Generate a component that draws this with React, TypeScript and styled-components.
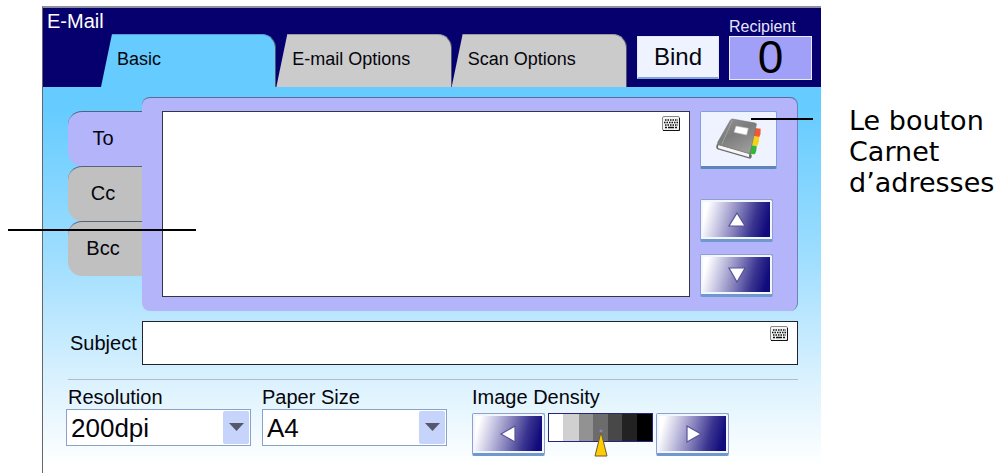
import React, { useState } from "react";
import styled, { createGlobalStyle } from "styled-components";

const navy = "#06006e";
const sans = '"Liberation Sans", Arial, sans-serif';

const GlobalStyle = createGlobalStyle`
  *, *::before, *::after { box-sizing: border-box; }
  body { margin: 0; background: #fff; color: #05050c; font-family: ${sans}; }
  button, input, select, textarea { font-family: inherit; color: inherit; margin: 0; }
`;

const Page = styled.div`
  display: flex;
  align-items: stretch;
  padding: 6px 0 0 42px;
  overflow: hidden;
`;

const Screen = styled.main`
  position: relative;
  flex: 1;
  min-width: 0;
  border-top: 2px solid #8c8f9c;
  border-left: 1px solid #62666e;
`;

const Header = styled.header`
  display: flex;
  align-items: flex-end;
  gap: 10px;
  height: 79px;
  padding-right: 9px;
  background: ${navy};
`;

const HeaderMain = styled.div`
  flex: 1;
  min-width: 0;
`;

const Title = styled.h1`
  margin: 0;
  padding-left: 4px;
  font-size: 20px;
  font-weight: 400;
  line-height: 26px;
  color: #fff;
`;

const Tabs = styled.nav`
  display: flex;
  padding-left: 58px;
`;

const Tab = styled.button<{ $active?: boolean }>`
  flex: 1;
  height: 53px;
  padding: 0 0 4px 16px;
  border: 0;
  border-right: 1px solid #50556e;
  border-top: 1px solid ${(p) => (p.$active ? "#5a9ccc" : "#9a9aa4")};
  border-radius: 0 14px 0 0;
  clip-path: polygon(11px 0, 100% 0, 100% 100%, 0 100%);
  background: ${(p) => (p.$active ? "#66ccff" : "#cbcbcb")};
  font-size: 18px;
  line-height: 20px;
  text-align: left;
  white-space: nowrap;
`;

const BindButton = styled.button`
  width: 82px;
  height: 43px;
  margin-bottom: 8px;
  padding: 0;
  border: 1px solid #dfe8fb;
  border-bottom: 2px solid #7fa6d6;
  background: #eef3ff;
  font-size: 24px;
`;

const Recipient = styled.div`
  width: 83px;
  padding-bottom: 7px;
`;

const RecipientLabel = styled.div`
  font-size: 16px;
  line-height: 18px;
  color: #e4e4fa;
`;

const RecipientCount = styled.output`
  display: block;
  height: 44px;
  border: 1px solid #e8e8ff;
  background: #a0a0f8;
  font-size: 46px;
  line-height: 40px;
  text-align: center;
  color: #000;
`;

const Body = styled.div`
  padding: 10px 23px 17px 25px;
  background: linear-gradient(#66ccff 6%, #a0deff 45%, #dcf2fe 77%, #fff 98%);
`;

const AddressRow = styled.section`
  display: flex;
`;

const SideTabs = styled.nav`
  display: flex;
  flex-direction: column;
  width: 74px;
  padding-top: 14px;
`;

const SideTab = styled.button<{ $active?: boolean }>`
  height: 55px;
  padding: 0 4px 2px 0;
  border: 0;
  border-top: 1px solid #56627a;
  border-radius: 14px 0 0 14px;
  background: ${(p) => (p.$active ? "#b4b4fa" : "#c0c0c0")};
  font-size: 20px;
`;

const AddressPanel = styled.div`
  flex: 1;
  min-width: 0;
  display: flex;
  gap: 10px;
  padding: 13px 20px 14px 20px;
  border-top: 1px solid #5c6a98;
  border-right: 1px solid #6f7fbc;
  border-radius: 8px;
  background: #b4b4fa;
`;

const Field = styled.div`
  position: relative;
  flex: 1;
  min-width: 0;
`;

const AddressBox = styled.textarea`
  display: block;
  width: 100%;
  height: 186px;
  padding: 8px 36px 8px 8px;
  border: 1px solid #33334a;
  border-radius: 0;
  background: #fff;
  font-size: 20px;
  resize: none;
`;

const SubjectBox = styled.input`
  display: block;
  width: 100%;
  height: 44px;
  padding: 0 36px 0 8px;
  border: 1px solid #22242c;
  border-radius: 0;
  background: #fff;
  font-size: 20px;
`;

const KeyboardMark = styled.span`
  position: absolute;
  top: 5px;
  right: 10px;
  line-height: 0;
`;

const PanelTools = styled.div`
  display: flex;
  flex-direction: column;
  gap: 12px;
  width: 77px;
`;

const BookButton = styled.button`
  position: relative;
  height: 58px;
  margin-bottom: auto;
  padding: 0;
  border: 1px solid #7fa0dc;
  border-bottom: 3px solid #5b86bc;
  border-radius: 2px;
  background: #eef3ff;
  line-height: 0;
`;

const ArrowButton = styled.button`
  width: 73px;
  height: 43px;
  padding: 0;
  border: 1px solid #8e9fd2;
  border-bottom: 3px solid #6f98cc;
  border-radius: 2px;
  background: linear-gradient(105deg, #fff 10%, #c4c2e0 30%, #8581bc 50%, #3a3490 72%, #100a7c 90%);
  box-shadow: inset 0 0 0 2px #f2f6ff;
  line-height: 0;
`;

const SubjectRow = styled.div`
  display: flex;
  align-items: center;
  margin-top: 10px;
`;

const SubjectLabel = styled.label`
  width: 74px;
  padding-left: 2px;
  font-size: 20px;
  line-height: 24px;
`;

const Settings = styled.section`
  display: flex;
  gap: 11px;
  margin: 14px 0 0 -2px;
  padding-top: 6px;
  position: relative;
  &::before {
    content: "";
    position: absolute;
    top: 0;
    left: 2px;
    right: 0;
    border-top: 1px solid #aebccb;
  }
`;

const Setting = styled.div`
  width: 185px;
`;

const Density = styled.div`
  margin-left: 14px;
`;

const SettingLabel = styled.label<{ $inset?: boolean }>`
  display: block;
  padding-left: ${(p) => (p.$inset ? 2 : 0)}px;
  font-size: 20px;
  line-height: 24px;
  white-space: nowrap;
`;

const SelectFrame = styled.div`
  display: grid;
  align-items: center;
  height: 37px;
  border: 1px solid #8aa2c8;
  background: #fff;
  & > * { grid-area: 1 / 1; }
`;

const Select = styled.select`
  appearance: none;
  width: 100%;
  height: 35px;
  padding: 0 32px 0 4px;
  border: 0;
  background: transparent;
  font-size: 26px;
`;

const SelectArrow = styled.span`
  display: flex;
  align-items: center;
  justify-content: center;
  justify-self: end;
  width: 26px;
  height: 33px;
  margin-right: 1px;
  border-radius: 2px;
  background: #c6d3fb;
  pointer-events: none;
`;

const DensityRow = styled.div`
  display: flex;
  gap: 3px;
  padding-top: 4px;
`;

const Scale = styled.div`
  position: relative;
  width: 105px;
`;

const ScaleInput = styled.input`
  appearance: none;
  display: block;
  width: 100%;
  height: 29px;
  border: 1px solid #2c2478;
  background: linear-gradient(
    90deg,
    #fff 0 14%, #d0d0d0 14% 29%, #929292 29% 43%, #6c6c6c 43% 57%,
    #484848 57% 71%, #222 71% 85%, #000 85%
  );
  &::-webkit-slider-thumb { appearance: none; width: 14px; height: 27px; background: transparent; }
`;

const Marker = styled.svg`
  position: absolute;
  top: 14px;
  margin-left: -7px;
  pointer-events: none;
`;

const CalloutLine = styled.span`
  position: absolute;
  height: 2px;
  background: #000;
  pointer-events: none;
`;

const FieldCallout = styled(CalloutLine)`
  top: 221px;
  left: -35px;
  width: 188px;
`;

const BookCallout = styled(CalloutLine)`
  top: 6px;
  left: 50px;
  width: 62px;
`;

const Note = styled.aside`
  flex: 0 0 180px;
  padding: 99px 0 0 28px;
  font-family: "DejaVu Sans", Verdana, sans-serif;
  font-size: 27px;
  line-height: 31px;
  color: #000;
  white-space: nowrap;
`;

const KeyboardIcon = () => (
  <svg width="18" height="15" viewBox="0 0 18 15" aria-hidden="true">
    <rect x="0.5" y="0.5" width="17" height="14" rx="1.5" fill="#f4f4f4" stroke="#8a8a8a" />
    <path d="M1 14.5H17.5V2" fill="none" stroke="#111" />
    <path d="M3 4H16M2 6.500H16M3 9H16" stroke="#111" strokeWidth="1.500" strokeDasharray="1.500 1" />
    <path d="M3 11.500H5M6 11.500H12M13 11.500H15" stroke="#111" strokeWidth="1.500" />
  </svg>
);

const BookIcon = () => (
  <svg width="45" height="42" viewBox="0 0 135 126" aria-hidden="true">
    <defs>
      <linearGradient id="cover" x1="0" y1="0" x2="0.6" y2="1">
        <stop offset="0" stopColor="#969696" />
        <stop offset="0.5" stopColor="#7c7c7c" />
        <stop offset="1" stopColor="#9a9a9a" />
      </linearGradient>
    </defs>
    <path d="M110 29L134 32Q135 48 130 57L106 54Z" fill="#f2592e" />
    <path d="M106 55L130 57Q130 74 124 84L100 80Z" fill="#f4d414" />
    <path d="M102 81L122 84Q122 102 116 109L96 108Z" fill="#35b53a" />
    <path d="M3 78Q-2 88 4 94L102 122Q108 122 107 112L102 106Z" fill="#6a6a6a" />
    <path d="M8 81L100 107Q98 113 100 118L7 91Q4 87 8 81Z" fill="#f7f7f7" />
    <path d="M42 8Q45 2 50 3L117 15Q123 16 121 21L103 102Q101 107 96 106L8 80Q2 78 5 73Z" fill="url(#cover)" stroke="#6c6c6c" strokeWidth="1.500" />
    <path d="M50 5L17 80" stroke="#adadad" strokeWidth="2" />
    <path d="M60 24L97 31L92 51L54 43Z" fill="#fff" stroke="#bbb" strokeWidth="2" />
  </svg>
);

const shapes = {
  up: "M10 3L18 16H2Z",
  down: "M2 3H18L10 17Z",
  left: "M2 10L16 2V18Z",
  right: "M4 2V18L18 10Z",
};

const Triangle = ({ dir }: { dir: keyof typeof shapes }) => (
  <svg width="20" height="20" viewBox="0 0 20 20" aria-hidden="true">
    <path d={shapes[dir]} fill="#fff" stroke="#5a5298" strokeWidth="1.2" />
  </svg>
);

const DropArrow = () => (
  <SelectArrow>
    <svg width="15" height="9" viewBox="0 0 15 9" aria-hidden="true">
      <path d="M0 0H15L7.500 8Z" fill="#55586a" />
    </svg>
  </SelectArrow>
);

export default function App() {
  const [tab, setTab] = useState("Basic");
  const [line, setLine] = useState("To");
  const [density, setDensity] = useState(3);

  return (
    <>
      <GlobalStyle />
      <Page>
        <Screen>
          <Header>
            <HeaderMain>
              <Title>E-Mail</Title>
              <Tabs>
                {["Basic", "E-mail Options", "Scan Options"].map((name) => (
                  <Tab key={name} type="button" $active={tab === name} onClick={() => setTab(name)}>
                    {name}
                  </Tab>
                ))}
              </Tabs>
            </HeaderMain>
            <BindButton type="button">Bind</BindButton>
            <Recipient>
              <RecipientLabel>Recipient</RecipientLabel>
              <RecipientCount>0</RecipientCount>
            </Recipient>
          </Header>
          <Body>
            <AddressRow>
              <SideTabs>
                {["To", "Cc", "Bcc"].map((name) => (
                  <SideTab key={name} type="button" $active={line === name} onClick={() => setLine(name)}>
                    {name}
                  </SideTab>
                ))}
              </SideTabs>
              <AddressPanel>
                <Field>
                  <AddressBox aria-label={line} />
                  <KeyboardMark><KeyboardIcon /></KeyboardMark>
                </Field>
                <PanelTools>
                  <BookButton type="button" aria-label="Carnet d'adresses">
                    <BookIcon />
                    <BookCallout />
                  </BookButton>
                  <ArrowButton type="button" aria-label="Up"><Triangle dir="up" /></ArrowButton>
                  <ArrowButton type="button" aria-label="Down"><Triangle dir="down" /></ArrowButton>
                </PanelTools>
              </AddressPanel>
            </AddressRow>
            <SubjectRow>
              <SubjectLabel htmlFor="subject">Subject</SubjectLabel>
              <Field>
                <SubjectBox id="subject" type="text" />
                <KeyboardMark><KeyboardIcon /></KeyboardMark>
              </Field>
            </SubjectRow>
            <Settings>
              <Setting>
                <SettingLabel htmlFor="resolution" $inset>Resolution</SettingLabel>
                <SelectFrame>
                  <Select id="resolution"><option>200dpi</option></Select>
                  <DropArrow />
                </SelectFrame>
              </Setting>
              <Setting>
                <SettingLabel htmlFor="paper">Paper Size</SettingLabel>
                <SelectFrame>
                  <Select id="paper"><option>A4</option></Select>
                  <DropArrow />
                </SelectFrame>
              </Setting>
              <Density>
                <SettingLabel htmlFor="density">Image Density</SettingLabel>
                <DensityRow>
                  <ArrowButton type="button" aria-label="Lighter" onClick={() => setDensity(Math.max(0, density - 1))}>
                    <Triangle dir="left" />
                  </ArrowButton>
                  <Scale>
                    <ScaleInput
                      id="density"
                      type="range"
                      min={0}
                      max={6}
                      value={density}
                      onChange={(e) => setDensity(Number(e.target.value))}
                    />
                    <Marker width="14" height="30" viewBox="0 0 14 30" style={{ left: `${((density + 0.5) / 7) * 100}%` }}>
                      <path d="M7 5L13 29H1Z" fill="#fc0" stroke="#6b5a3c" />
                      <circle cx="7" cy="4" r="1.500" fill="#8c83c8" />
                    </Marker>
                  </Scale>
                  <ArrowButton type="button" aria-label="Darker" onClick={() => setDensity(Math.min(6, density + 1))}>
                    <Triangle dir="right" />
                  </ArrowButton>
                </DensityRow>
              </Density>
            </Settings>
          </Body>
          <FieldCallout />
        </Screen>
        <Note>
          Le bouton
          <br />
          Carnet
          <br />
          d’adresses
        </Note>
      </Page>
    </>
  );
}
